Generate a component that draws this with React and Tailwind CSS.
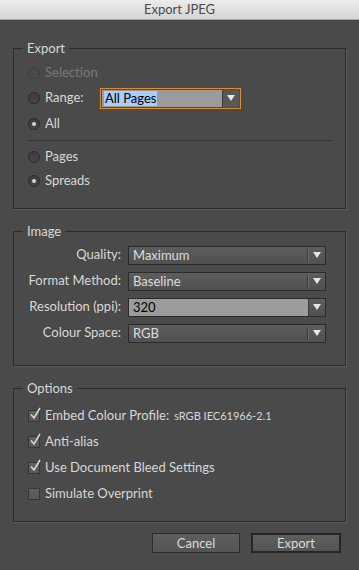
import React from 'react';

const font = { fontFamily: 'Lato, "Open Sans", sans-serif' };

const Arrow = ({ color = '#e6e6e6' }) => (
  <svg width="8" height="6" viewBox="0 0 8 6">
    <path d="M0 0 H8 L4 6 Z" fill={color} />
  </svg>
);

const Radio = ({ checked, disabled }) => (
  <span
    className={`flex h-[12px] w-[12px] items-center justify-center rounded-full border bg-gradient-to-b ${
      disabled
        ? 'border-[#3d3d3d] from-[#474747] to-[#4b4b4b]'
        : 'border-[#2a2a2a] from-[#3c3c3c] to-[#474747]'
    }`}
  >
    {checked && <span className="h-[4px] w-[4px] rounded-full bg-[#d4d4d4]" />}
  </span>
);

const Check = ({ checked }) => (
  <span className="relative flex h-[12px] w-[12px] border border-[#363636] bg-gradient-to-b from-[#616161] to-[#575757]">
    {checked && (
      <svg className="absolute -top-[4px] left-[1px]" width="11" height="13" viewBox="0 0 11 13">
        <path d="M1 7.5 L4 11 L10 1" fill="none" stroke="#dadada" strokeWidth="1.5" />
      </svg>
    )}
  </span>
);

const Select = ({ value }) => (
  <div className="flex h-[19px] w-[198px] border border-[#2b2b2b] bg-gradient-to-b from-[#5d5d5d] to-[#505050]">
    <div className="flex-1 pl-[4px] text-[13px] leading-[17px] text-[#dedede]">{value}</div>
    <div className="my-[2px] w-px bg-[#3a3a3a]" />
    <div className="my-[2px] w-px bg-[#6c6c6c]" />
    <div className="flex w-[16px] items-center justify-center">
      <Arrow />
    </div>
  </div>
);

const Group = ({ title, className, children }) => (
  <fieldset
    className={`mx-[13px] min-w-0 border border-[#2c2c2c] shadow-[1px_1px_0_#5b5b5b] ${className}`}
  >
    <legend className="ml-[9px] px-[4px] text-[13px] leading-[16px] text-[#d8d8d8]">{title}</legend>
    {children}
  </fieldset>
);

export default function App() {
  return (
    <div className="h-[570px] w-[359px] bg-[#4a4a4a] text-[13px] text-[#d8d8d8]" style={font}>
      <div className="flex h-[20px] items-center justify-center border-b border-[#a9a9a9] bg-gradient-to-b from-[#ececec] to-[#d5d5d5] text-[13px] text-[#4a4a4a]">
        Export JPEG
      </div>

      <Group title="Export" className="mt-[20px] pb-[15px] pt-[5px]">
        <div className="flex h-[24px] items-center gap-[5px] pl-[14px] text-[#787878]">
          <Radio disabled />
          <span>Selection</span>
        </div>
        <div className="flex h-[26px] items-center pl-[14px]">
          <Radio />
          <span className="ml-[5px] w-[55px]">Range:</span>
          <div className="flex h-[21px] w-[141px] border border-[#e38a2f] p-px">
            <div className="flex flex-1 items-center bg-[#9b9b9b] pl-[2px]">
              <span className="bg-[#a9cdf6] px-px text-[13px] leading-[15px] text-black">All Pages</span>
            </div>
            <div className="flex w-[17px] items-center justify-center border-l border-[#3a3a3a] bg-[#585858]">
              <Arrow />
            </div>
          </div>
        </div>
        <div className="flex h-[26px] items-center gap-[5px] pl-[14px]">
          <Radio checked />
          <span>All</span>
        </div>
        <div className="ml-[13px] mr-[13px] mt-[3px] h-px bg-[#333]" />
        <div className="mt-[4px] flex h-[24px] items-center gap-[5px] pl-[14px]">
          <Radio />
          <span>Pages</span>
        </div>
        <div className="flex h-[24px] items-center gap-[5px] pl-[14px]">
          <Radio checked />
          <span>Spreads</span>
        </div>
      </Group>

      <Group title="Image" className="mt-[14px] pb-[19px] pt-[3px]">
        {[
          ['Quality:', 'Maximum'],
          ['Format Method:', 'Baseline'],
          ['Resolution (ppi):', null],
          ['Colour Space:', 'RGB'],
        ].map(([label, value]) => (
          <div key={label} className="flex h-[26px] items-center">
            <span className="w-[114px] pr-[7px] text-right">{label}</span>
            {value ? (
              <Select value={value} />
            ) : (
              <div className="flex h-[19px] w-[198px] border border-[#2b2b2b]">
                <div className="flex-1 bg-[#9c9c9c] pl-[4px] text-[13px] leading-[17px] text-black">320</div>
                <div className="flex w-[17px] items-center justify-center border-l border-[#3a3a3a] bg-gradient-to-b from-[#5d5d5d] to-[#505050]">
                  <Arrow />
                </div>
              </div>
            )}
          </div>
        ))}
      </Group>

      <Group title="Options" className="mt-[14px] pb-[14px] pt-[7px]">
        <div className="flex h-[26px] items-center gap-[5px] pl-[14px]">
          <Check checked />
          <span>Embed Colour Profile:</span>
          <span className="text-[11px]">sRGB IEC61966-2.1</span>
        </div>
        <div className="flex h-[26px] items-center gap-[5px] pl-[14px]">
          <Check checked />
          <span>Anti-alias</span>
        </div>
        <div className="flex h-[26px] items-center gap-[5px] pl-[14px]">
          <Check checked />
          <span>Use Document Bleed Settings</span>
        </div>
        <div className="flex h-[26px] items-center gap-[5px] pl-[14px]">
          <Check />
          <span>Simulate Overprint</span>
        </div>
      </Group>

      <div className="mt-[11px] flex justify-end gap-[11px] pr-[18px]">
        <button className="h-[20px] w-[88px] border border-[#2c2c2c] bg-gradient-to-b from-[#5e5e5e] to-[#545454] text-[13px] leading-[18px] text-[#d6dbe0]">
          Cancel
        </button>
        <button className="h-[20px] w-[90px] border-2 border-[#262626] bg-gradient-to-b from-[#5e5e5e] to-[#545454] text-[13px] leading-[16px] text-[#d6dbe0]">
          Export
        </button>
      </div>
    </div>
  );
}
